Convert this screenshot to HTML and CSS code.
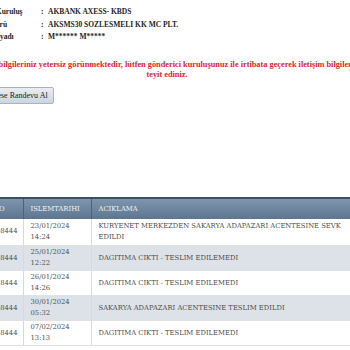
FILE: index.html
```html
<!DOCTYPE html>
<html lang="tr">
<head>
<meta charset="utf-8">
<title>Gönderi Sorgulama</title>
<link rel="stylesheet" href="styles.css">
</head>
<body>
<div class="page">
  <div class="info">
    <div class="info-row"><span class="lbl">Gönderen Kuruluş</span><span class="colon">:</span><span class="val">AKBANK AXESS- KBDS</span></div>
    <div class="info-row"><span class="lbl">Gönderi Türü</span><span class="colon">:</span><span class="val">AKSMS30 SOZLESMELI KK MC PLT.</span></div>
    <div class="info-row"><span class="lbl">Alıcı Adı Soyadı</span><span class="colon">:</span><span class="val">M****** M*****</span></div>
  </div>
  <p class="warn">Gönderi bilgileriniz yetersiz görünmektedir, lütfen gönderici kuruluşunuz ile irtibata geçerek iletişim bilgilerinizi teyit ediniz.</p>
  <div class="actions"><button class="btn">Adrese Randevu Al</button></div>
  <table class="grid">
    <colgroup><col class="w1"><col class="w2"><col class="w3"></colgroup>
    <thead>
      <tr><th class="c1">NO</th><th class="c2">ISLEMTARIHI</th><th class="c3">ACIKLAMA</th></tr>
    </thead>
    <tbody>
      <tr class="first"><td class="c1">8444</td><td class="c2">23/01/2024<br>14:24</td><td class="c3">KURYENET MERKEZDEN SAKARYA ADAPAZARI ACENTESINE SEVK EDILDI</td></tr>
      <tr class="alt"><td class="c1">8444</td><td class="c2">25/01/2024<br>12:22</td><td class="c3">DAGITIMA CIKTI - TESLIM EDILEMEDI</td></tr>
      <tr><td class="c1">8444</td><td class="c2">26/01/2024<br>14:26</td><td class="c3">DAGITIMA CIKTI - TESLIM EDILEMEDI</td></tr>
      <tr class="alt"><td class="c1">8444</td><td class="c2">30/01/2024<br>05:32</td><td class="c3">SAKARYA ADAPAZARI ACENTESINE TESLIM EDILDI</td></tr>
      <tr><td class="c1">8444</td><td class="c2">07/02/2024<br>13:13</td><td class="c3">DAGITIMA CIKTI - TESLIM EDILEMEDI</td></tr>
    </tbody>
  </table>
</div>
</body>
</html>
```
FILE: styles.css
```css
html, body {
  margin: 0;
  padding: 0;
  background: #fff;
  overflow: hidden;
}
body {
  font-family: "Liberation Serif", "Times New Roman", serif;
  width: 350px;
  height: 350px;
}
.page {
  margin-left: -40px;
  width: 400px;
}
.info {
  padding-top: 6px;
  padding-left: 2px;
}
.info-row {
  display: flex;
  font-weight: bold;
  font-size: 7.5px;
  line-height: 12.5px;
  color: #1e1e1e;
}
.lbl {
  width: 79px;
  white-space: nowrap;
}
.colon {
  width: 7px;
}
.val {
  flex: 1;
  white-space: nowrap;
}
.warn {
  margin: 16px 0 0 5px;
  color: #e3242b;
  font-weight: bold;
  font-size: 8.3px;
  line-height: 10.5px;
  text-align: center;
  width: 404px;
}
.actions {
  display: flex;
  margin-top: 6px;
  padding-left: 18px;
}
.btn {
  font-family: "Liberation Serif", serif;
  font-size: 8px;
  height: 17px;
  padding: 0 5px 0 6px;
  border: 1px solid #a7b4c1;
  border-radius: 2px;
  background: linear-gradient(#e8edf2, #ccd6df);
  color: #222;
}
.grid {
  margin-top: 93px;
  border-collapse: collapse;
  table-layout: fixed;
  width: 400px;
  font-family: "DejaVu Serif", serif;
  font-size: 6.8px;
}
.w1 { width: 63px; }
.w2 { width: 68px; }
.w3 { width: 269px; }
.grid th, .grid td {
  box-sizing: border-box;
}
.grid th {
  height: 21px;
  border-top: 2px solid #3c4e63;
  background: linear-gradient(#7d95ad, #5d758e);
  color: #eef2f6;
  font-weight: normal;
  text-align: left;
  padding: 0 7px;
  border-left: 1px solid #4d627a;
}
.grid td {
  height: 25px;
  padding: 0 7px;
  color: #4f4f4f;
  line-height: 11px;
  border-left: 1px solid #d9d9d9;
  border-bottom: 1px solid #e2e2e2;
  vertical-align: middle;
}
.grid tr.first td {
  height: 27px;
}
.grid tr.alt td {
  background: #dce2e7;
}
.grid th.c1, .grid td.c1 {
  border-left: none;
  text-align: right;
}
.grid th.c1 { padding-right: 18px; }
.grid td.c1 { padding-right: 5px; }
```
